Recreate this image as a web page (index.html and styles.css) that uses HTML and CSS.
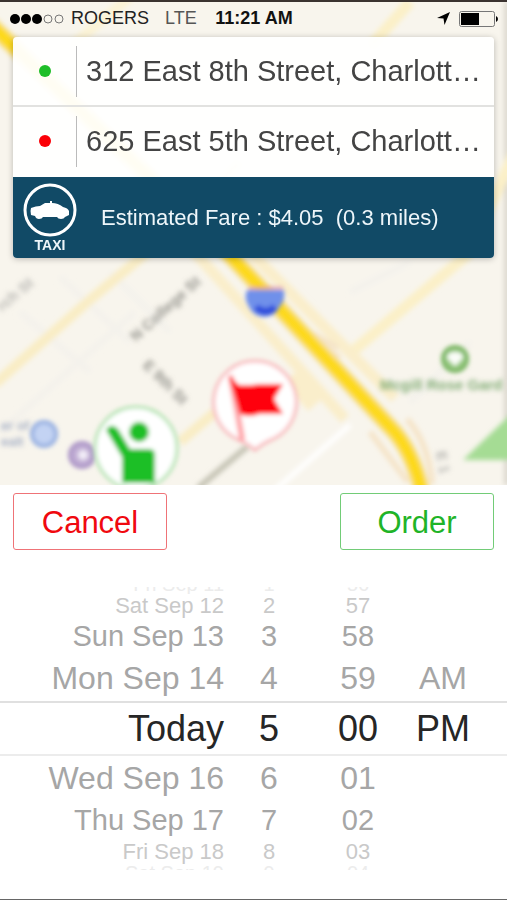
FILE: index.html
```html
<!DOCTYPE html>
<html lang="en">
<head>
    <meta charset="UTF-8">
    <meta name="viewport" content="width=device-width, initial-scale=1.0">
    <title>Order a Taxi</title>
    <link rel="stylesheet" href="styles.css">
</head>
<body>
    <section class="map">
        <svg class="map-art" viewBox="0 0 507 483" preserveAspectRatio="xMidYMin slice" aria-hidden="true">
            <defs>
                <filter id="soft" x="-20%" y="-20%" width="140%" height="140%"><feGaussianBlur stdDeviation="2.4"/></filter>
                <filter id="pin-soft"><feGaussianBlur stdDeviation="2"/></filter>
            </defs>
            <rect width="507" height="483" fill="#f8f5ed"/>
            <g filter="url(#soft)" fill="none">
                <!-- blocks and side streets -->
                <path d="M20 310l70 60M60 275l70 65M110 270l60 60M0 430l135-120M350 290l60-30M410 400l60-60" stroke="#f4f2ec" stroke-width="7"/>
                <path d="M350 423l-75 65" stroke="#fff" stroke-width="5"/>
                <path d="M507 0v483" stroke="#dcd8cf" stroke-width="6"/>
                <path d="M-5 382L85 302L145 252L240 160" stroke="#f9edc5" stroke-width="10"/>
                <path d="M180 440l35-30" stroke="#f9edc5" stroke-width="10"/>
                <path d="M352 350L468 252L515 150M370 45l40-45" stroke="#fbf0c8" stroke-width="11"/>
                <path d="M70 45l60-50" stroke="#fbf3d6" stroke-width="10"/>
                <path d="M190 245L345 417M250 250L395 396" stroke="#faeecb" stroke-width="11"/>
                <path d="M290 375l25 28" stroke="#faeecb" stroke-width="18"/>
                <path d="M300 330l40 26M312 332l26 14M370 430l38 50M407 417q22 25 25 65" stroke="#f5e4c8" stroke-width="6"/>
                <path d="M248 444l-50 42" stroke="#c5c3b4" stroke-width="6"/>
                <!-- interstate -->
                <path d="M-10 22L225 248L390 425Q412 447 422 490" stroke="#f3df9c" stroke-width="17"/>
                <path d="M-10 22L225 248L390 425Q412 447 422 490" stroke="#fdd91c" stroke-width="13"/>
                <path d="M512 411l-49 47h49z" fill="#a5dc94"/>
            </g>
            <g filter="url(#pin-soft)">
                <path d="M247 288h37q1 10-3 15q-6 12-17 12t-16-12q-4-6-1-15z" fill="#6f90ea"/>
                <path d="M249 286h34" stroke="#e5aab4" stroke-width="3"/>
                <path d="M256 305q10 9 19 0" stroke="#3050dc" stroke-width="7" fill="none"/>
                <circle cx="44" cy="432" r="12" fill="#c3d3f3" stroke="#98b1e2" stroke-width="4"/>
                <circle cx="82" cy="453" r="12" fill="#c2afd5" stroke="#ad97c7" stroke-width="4"/>
                <circle cx="83" cy="453" r="5" fill="#f1ecf7"/>
                <circle cx="455" cy="357" r="12" fill="#9acb84" stroke="#7ab663" stroke-width="4"/>
                <path d="M455 350q8 0 8 6l-8 8l-8-8q0-6 8-6z" fill="#fafdf8"/>
            </g>
            <g class="map-labels" filter="url(#soft)">
                <text transform="translate(136 340) rotate(-42)">N College St</text>
                <text transform="translate(142 364) rotate(45)">E 9th St</text>
                <text class="faint" transform="translate(2 310) rotate(-40)">rch St</text>
                <text class="blue" x="1" y="428">er of</text>
                <text class="blue" x="1" y="444">ealt</text>
                <text class="green" x="380" y="388">Mcgill Rose Gard</text>
                <text class="faint" transform="translate(436 450) rotate(80)">E 1</text>
            </g>
            <!-- destination pin -->
            <g filter="url(#pin-soft)">
                <path d="M255 359a41 41 0 0 1 18 78q-10 4-18 11q-8-7-18-11a41 41 0 0 1 18-78z" fill="#fff" stroke="#f8b4b8" stroke-width="3"/>
                <path d="M231 376l11 60" stroke="#ffa6aa" stroke-width="6" stroke-linecap="round"/>
                <path d="M229 374l10 9h13l8-1h23l-9 15l9 15h-24q-10 4-19 0z" fill="#ff0008"/>
            </g>
            <!-- pickup pin -->
            <g filter="url(#pin-soft)">
                <circle cx="136" cy="446" r="41" fill="#fff" stroke="#aee2ad" stroke-width="3"/>
                <circle cx="139" cy="430" r="10" fill="#1cbf26"/>
                <path d="M106 428q5-8 12-1l12 20h19q6 0 6 6v28h-33v-26z" fill="#1cbf26"/>
            </g>
        </svg>

        <header class="status-bar">
            <div class="carrier">
                <svg class="signal" viewBox="0 0 54 12" aria-hidden="true">
                    <g fill="#000"><circle cx="5" cy="6" r="5"/><circle cx="16" cy="6" r="5"/><circle cx="27" cy="6" r="5"/></g>
                    <g fill="none" stroke="#777"><circle cx="38" cy="6" r="4"/><circle cx="49" cy="6" r="4"/></g>
                </svg>
                <span>ROGERS</span>
                <span class="network">LTE</span>
            </div>
            <time class="clock">11:21 AM</time>
            <div class="indicators">
                <svg class="location" viewBox="0 0 13 13" aria-hidden="true"><path d="M13 0L7.5 13L6.5 6.5L0 6z"/></svg>
                <svg class="battery" viewBox="0 0 39 16" aria-hidden="true">
                    <rect x="0.5" y="0.5" width="35" height="15" rx="2" fill="none" stroke="#777"/>
                    <path d="M2 2h18v12H2z"/>
                    <path d="M37 5q2 1 2 3t-2 3z"/>
                </svg>
            </div>
        </header>

        <div class="trip">
            <button class="address" type="button" aria-label="Pickup address">
                <span class="dot pickup"></span>
                <span class="address-text">312 East 8th Street, Charlott…</span>
            </button>
            <button class="address" type="button" aria-label="Destination address">
                <span class="dot dropoff"></span>
                <span class="address-text">625 East 5th Street, Charlott…</span>
            </button>
            <div class="fare">
                <div class="taxi">
                    <svg viewBox="0 0 54 54" aria-hidden="true">
                        <circle cx="27" cy="27" r="25" fill="none" stroke="#fff" stroke-width="3"/>
                        <path fill="#fff" d="M8 25q5-2 9-2l5-3h5v-2h2v2q6 0 11 4q5 1 6 4v4l-4 2q-1 2-4 2t-4-2H20q-1 2-4 2t-4-3l-4-1q-1-4 0-7z"/>
                    </svg>
                    <span>TAXI</span>
                </div>
                <p>Estimated Fare : $4.05&nbsp; (0.3 miles)</p>
            </div>
        </div>
    </section>

    <main class="sheet">
        <div class="actions">
            <button class="action cancel" type="button">Cancel</button>
            <button class="action order" type="button">Order</button>
        </div>

        <div class="picker">
            <div class="wheel date" role="group" aria-label="Date">
                <button class="edge top" type="button">Fri Sep 11</button>
                <button class="far" type="button">Sat Sep 12</button>
                <button class="mid" type="button">Sun Sep 13</button>
                <button class="near" type="button">Mon Sep 14</button>
                <button class="selected" type="button">Today</button>
                <button class="near" type="button">Wed Sep 16</button>
                <button class="mid" type="button">Thu Sep 17</button>
                <button class="far" type="button">Fri Sep 18</button>
                <button class="edge" type="button">Sat Sep 19</button>
            </div>
            <div class="wheel" role="group" aria-label="Hour">
                <button class="edge top" type="button">1</button>
                <button class="far" type="button">2</button>
                <button class="mid" type="button">3</button>
                <button class="near" type="button">4</button>
                <button class="selected" type="button">5</button>
                <button class="near" type="button">6</button>
                <button class="mid" type="button">7</button>
                <button class="far" type="button">8</button>
                <button class="edge" type="button">9</button>
            </div>
            <div class="wheel" role="group" aria-label="Minute">
                <button class="edge top" type="button">56</button>
                <button class="far" type="button">57</button>
                <button class="mid" type="button">58</button>
                <button class="near" type="button">59</button>
                <button class="selected" type="button">00</button>
                <button class="near" type="button">01</button>
                <button class="mid" type="button">02</button>
                <button class="far" type="button">03</button>
                <button class="edge" type="button">04</button>
            </div>
            <div class="wheel period" role="group" aria-label="AM or PM">
                <button class="near" type="button">AM</button>
                <button class="selected" type="button">PM</button>
            </div>
            <div class="wheel period">
                <span class="selected"></span>
            </div>
        </div>
    </main>
</body>
</html>
```

FILE: styles.css
```css
* {
    box-sizing: border-box;
}

body {
    display: flex;
    flex-direction: column;
    min-height: 100vh;
    margin: 0;
    border-top: 2px solid #3b3330;
    border-bottom: 1px solid #666;
    background: #fff;
    font-family: "Liberation Sans", Arial, sans-serif;
}

button {
    margin: 0;
    padding: 0;
    border: 0;
    background: none;
    color: inherit;
    font: inherit;
    cursor: pointer;
}

/* Map and everything on top of it */
.map {
    position: relative;
    padding-bottom: 227px;
    overflow: hidden;
}

.map-art {
    position: absolute;
    top: 0;
    left: 0;
    width: 100%;
    height: 100%;
}

.map-labels {
    font-size: 15px;
    font-weight: bold;
    fill: #96958f;
}

.map-labels .faint {
    fill: #b9b8b4;
}

.map-labels .blue {
    font-size: 13px;
    fill: #a5afc5;
}

.map-labels .green {
    fill: #83ad77;
}

.status-bar {
    position: relative;
    display: grid;
    grid-template-columns: 1fr auto 1fr;
    align-items: center;
    height: 35px;
    padding: 0 9px 2px 10px;
    font-size: 18px;
    color: #222;
}

.carrier,
.indicators {
    display: flex;
    align-items: center;
}

.signal {
    width: 54px;
    height: 12px;
    margin-right: 7px;
}

.network {
    margin-left: 16px;
    color: #555;
}

.clock {
    font-weight: bold;
    color: #111;
}

.indicators {
    justify-content: flex-end;
    gap: 9px;
}

.location {
    width: 13px;
    height: 13px;
}

.battery {
    width: 39px;
    height: 16px;
}

/* Trip card */
.trip {
    position: relative;
    margin: 0 13px;
    border-radius: 4px;
    background: rgba(255, 255, 255, 0.95);
    box-shadow: 0 1px 6px rgba(0, 0, 0, 0.25);
    overflow: hidden;
}

.address {
    display: flex;
    align-items: center;
    width: 100%;
    height: 70px;
    border-bottom: 2px solid #e2e2e0;
    text-align: left;
    color: #444;
}

.address + .address {
    border-bottom-color: transparent;
}

.dot {
    flex: none;
    width: 12px;
    height: 12px;
    margin: 0 25px 0 26px;
    border-radius: 50%;
}

.pickup {
    background: #1ebe28;
}

.dropoff {
    background: #fb0007;
}

.address-text {
    flex: 1;
    padding-left: 9px;
    border-left: 1px solid #bbb;
    font-size: 29px;
    line-height: 51px;
    white-space: nowrap;
}

.fare {
    display: flex;
    align-items: center;
    gap: 24px;
    height: 81px;
    padding-left: 10px;
    background: #114a66;
    color: #eef6fa;
    font-size: 22px;
}

.fare p {
    margin: 0;
}

.taxi {
    display: flex;
    flex-direction: column;
    align-items: center;
    font-size: 14px;
    font-weight: bold;
    line-height: 16px;
}

.taxi svg {
    width: 54px;
    height: 54px;
}

/* Bottom sheet */
.sheet {
    flex: 1;
    padding: 8px 0 29px;
}

.actions {
    display: flex;
    justify-content: space-between;
    padding: 0 13px;
}

.action {
    width: 154px;
    height: 57px;
    padding-top: 2px;
    border: 1px solid;
    border-radius: 3px;
    font-size: 31px;
}

.cancel {
    border-color: #ef7377;
    color: #f0090f;
}

.order {
    border-color: #72cc77;
    color: #1fb428;
}

.picker {
    display: grid;
    grid-template-columns: 224fr 90fr 88fr 82fr 23fr;
    margin-top: 37px;
}

.wheel {
    display: flex;
    flex-direction: column;
    color: #a6a6a6;
    white-space: nowrap;
}

.date button {
    text-align: right;
}

.period {
    padding-top: 69px;
}

.period:last-child {
    padding-top: 114px;
}

.near {
    height: 45px;
    font-size: 32px;
    line-height: 45px;
}

.mid {
    height: 39px;
    font-size: 29px;
    line-height: 39px;
}

.far {
    height: 23px;
    font-size: 22px;
    line-height: 23px;
    color: #c9c9c9;
}

.edge {
    display: flex;
    align-items: flex-start;
    justify-content: center;
    height: 7px;
    font-size: 20px;
    line-height: 20px;
    color: #ececec;
    overflow: hidden;
}

.edge.top {
    align-items: flex-end;
}

.date .edge {
    justify-content: flex-end;
}

.selected {
    height: 55px;
    border-top: 2px solid #e0e0e0;
    border-bottom: 2px solid #ececec;
    font-size: 36px;
    line-height: 51px;
    color: #262626;
}
```
